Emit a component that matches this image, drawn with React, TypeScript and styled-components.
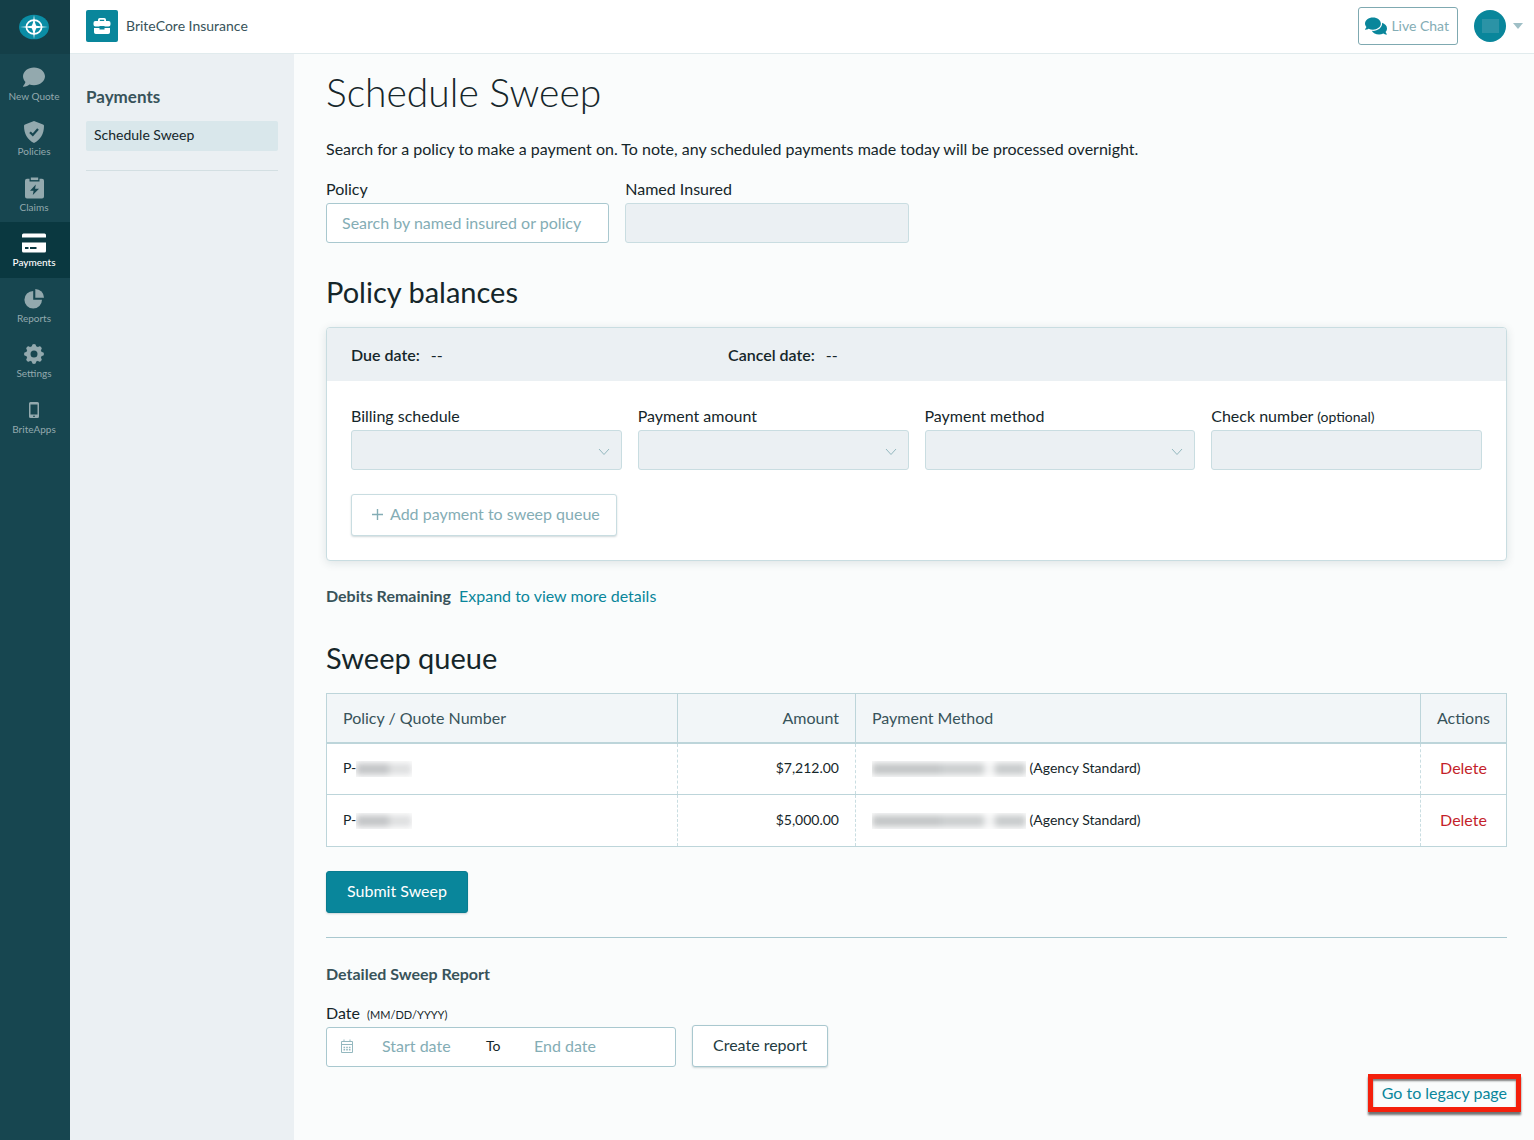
import React from "react";
import styled, { createGlobalStyle, css } from "styled-components";
import { FaComment, FaComments } from "react-icons/fa";

const color = {
  ink: "#15262a",
  slate: "#38535a",
  teal: "#09869b",
  line: "#a9c8cf",
  softLine: "#c9dde1",
  placeholder: "#84adb5",
  panel: "#ebf0f3",
  page: "#fafcfc",
  rail: "#174650",
  danger: "#c41f2b",
};

const GlobalStyle = createGlobalStyle`
  *, *::before, *::after { box-sizing: border-box; }
  body {
    margin: 0;
    background: ${color.page};
    color: ${color.ink};
    font-family: Lato, "Noto Sans", sans-serif;
    font-size: 16px;
    line-height: 24px;
  }
  h1, h2, h3, p { margin: 0; }
  button, input, select { font: inherit; }
  a { color: ${color.teal}; text-decoration: none; }
`;

const Shell = styled.div`
  display: grid;
  grid-template-columns: 70px 1fr;
  min-height: 100vh;
`;

const Rail = styled.div`
  background: ${color.rail};
`;

const Brand = styled.a`
  display: flex;
  height: 54px;
  align-items: center;
  justify-content: center;
  padding-right: 2px;
  background: #143f48;
`;

const RailNav = styled.nav`
  display: flex;
  flex-direction: column;
  padding-top: 2px;
`;

const RailItem = styled.a<{ $active?: boolean }>`
  display: flex;
  flex-direction: column;
  align-items: center;
  height: 55px;
  padding: 9px 2px 0 0;
  font-size: 10px;
  line-height: 14px;
  color: #93a9ae;
  &:nth-child(even) { height: 56px; }
  svg { height: 24px; }
  ${(p) => p.$active && css`
    background: #0a3840;
    color: #fff;
    font-weight: 500;
  `}
`;

const Body = styled.div`
  display: flex;
  flex-direction: column;
  min-width: 0;
`;

const TopBar = styled.header`
  display: flex;
  align-items: center;
  height: 54px;
  padding: 0 11px 1px 16px;
  background: #fff;
  border-bottom: 1px solid #e1ebed;
`;

const OrgIcon = styled.span`
  display: grid;
  place-items: center;
  width: 32px;
  height: 32px;
  margin-right: 8px;
  border-radius: 2px;
  background: ${color.teal};
`;

const OrgName = styled.span`
  flex: 1;
  font-size: 14px;
  color: ${color.slate};
`;

const ChatButton = styled.button`
  display: flex;
  align-items: center;
  gap: 4px;
  height: 38px;
  padding: 0 8px 0 6px;
  margin-right: 16px;
  border: 1px solid #7fa9b1;
  border-radius: 3px;
  background: #fff;
  color: ${color.placeholder};
  font-size: 14px;
  svg { color: ${color.teal}; }
`;

const UserMenu = styled.button`
  display: flex;
  align-items: center;
  gap: 7px;
  padding: 0;
  border: 0;
  background: none;
`;

const Avatar = styled.span`
  display: grid;
  place-items: center;
  width: 32px;
  height: 32px;
  border-radius: 50%;
  background: ${color.teal};
  &::before {
    content: "";
    width: 17px;
    height: 14px;
    background: #2b93a6;
  }
`;

const Columns = styled.div`
  display: grid;
  grid-template-columns: 224px 1fr;
  flex: 1;
`;

const SidePanel = styled.aside`
  padding: 31px 16px;
  background: ${color.panel};
`;

const SideTitle = styled.h2`
  margin-bottom: 12px;
  font-size: 17px;
  line-height: 24px;
  font-weight: 700;
  color: ${color.slate};
`;

const SideLink = styled.a`
  display: block;
  padding: 0 8px 2px;
  border-radius: 2px;
  background: #d9e7eb;
  color: ${color.ink};
  font-size: 14px;
  line-height: 28px;
`;

const SideRule = styled.hr`
  height: 1px;
  margin: 19px 0 0;
  border: 0;
  background: #d3dfe2;
`;

const Main = styled.main`
  min-width: 0;
  padding: 14px 13px 0 32px;
`;

const Content = styled.div`
  margin-right: 14px;
`;

const PageTitle = styled.h1`
  margin-bottom: 21px;
  font-size: 39px;
  line-height: 48px;
  font-weight: 300;
`;

const Intro = styled.p`
  margin-bottom: 17px;
`;

const SectionTitle = styled.h2`
  margin: 32px 0 18px;
  font-size: 29px;
  line-height: 34px;
  font-weight: 400;
`;

const FieldGrid = styled.div`
  display: grid;
  grid-template-columns: repeat(4, 1fr);
  gap: 16px;
`;

const FieldBox = styled.div`
  display: flex;
  flex-direction: column;
  gap: 3px;
  min-width: 0;
`;

const Label = styled.label`
  line-height: 22px;
  small { font-size: 14px; line-height: 14px; }
`;

const controlLook = css`
  width: 100%;
  height: 40px;
  padding: 0 15px 2px;
  border: 1px solid ${color.line};
  border-radius: 3px;
  background: #fff;
  color: ${color.ink};
  &::placeholder { color: ${color.placeholder}; opacity: 1; }
  &:disabled { background: ${color.panel}; border-color: ${color.softLine}; opacity: 1; }
`;

const TextInput = styled.input`
  ${controlLook}
`;

const Select = styled.select`
  ${controlLook}
  appearance: none;
  grid-area: 1 / 1;
`;

const SelectWrap = styled.div`
  display: grid;
  align-items: center;
  svg {
    grid-area: 1 / 1;
    justify-self: end;
    margin: 4px 12px 0 0;
    pointer-events: none;
    color: #94b8bf;
  }
`;

const Card = styled.section`
  border: 1px solid ${color.softLine};
  border-radius: 4px;
  background: #fff;
  box-shadow: 0 2px 10px rgba(20, 50, 60, 0.12);
`;

const CardHead = styled.dl`
  display: grid;
  grid-template-columns: repeat(3, 1fr);
  margin: 0;
  padding: 16px 24px;
  border-radius: 3px 3px 0 0;
  background: ${color.panel};
  line-height: 21px;
  div { display: flex; gap: 11px; }
  dt { font-weight: 600; }
  dd { margin: 0; }
`;

const CardBody = styled.div`
  padding: 24px;
`;

const Button = styled.button<{ $tone?: "primary" | "muted" }>`
  display: inline-flex;
  align-items: center;
  justify-content: center;
  gap: 6px;
  height: 42px;
  padding: 0 20px 2px;
  border: 1px solid ${color.line};
  border-radius: 3px;
  background: #fff;
  color: #233b41;
  box-shadow: 0 1px 2px rgba(20, 60, 70, 0.2);
  white-space: nowrap;
  ${(p) => p.$tone === "primary" && css`
    background: ${color.teal};
    border-color: #087c90;
    color: #fff;
  `}
  ${(p) => p.$tone === "muted" && css`
    margin-top: 24px;
    padding: 0 16px 2px 19px;
    border-color: ${color.softLine};
    color: ${color.placeholder};
  `}
`;

const Debits = styled.p`
  display: flex;
  gap: 8px;
  margin: 23px 0 33px;
  strong { color: ${color.slate}; font-weight: 700; }
`;

const Table = styled.table`
  width: 100%;
  table-layout: fixed;
  border-collapse: collapse;
  border: 1px solid #bdd5da;
  background: #fff;
  font-size: 14px;
`;

const Col = styled.col<{ $w?: number }>`
  ${(p) => p.$w && css`width: ${p.$w}px;`}
`;

type CellProps = { $align?: "left" | "right" | "center" };

const Th = styled.th<CellProps>`
  height: 49px;
  padding: 0 16px;
  border-right: 1px solid #bdd5da;
  border-bottom: 2px solid #bdd5da;
  background: #f2f6f8;
  color: ${color.slate};
  font-size: 16px;
  font-weight: 400;
  text-align: ${(p) => p.$align ?? "left"};
`;

const Td = styled.td<CellProps>`
  height: 52px;
  padding: 0 16px 1px;
  border-bottom: 1px solid #bdd5da;
  text-align: ${(p) => p.$align ?? "left"};
  & + & { border-left: 1px dashed #c9dde1; }
`;

const Redacted = styled.span<{ $wide?: boolean }>`
  display: inline-block;
  width: ${(p) => (p.$wide ? 154 : 56)}px;
  height: 16px;
  padding: 2px 0;
  vertical-align: -4px;
  overflow: hidden;
  &::before {
    content: "";
    display: block;
    height: 12px;
    filter: blur(3px);
    background: ${(p) =>
      p.$wide
        ? "linear-gradient(90deg, #c3c6c7 0 45%, #cbcecf 45% 73%, #f4f5f5 73% 80%, #c8cbcc 80%)"
        : "linear-gradient(90deg, #c3c5c7 0 58%, #dfe0e1 60% 100%)"};
  }
`;

const DeleteButton = styled.button`
  padding: 0;
  border: 0;
  background: none;
  color: ${color.danger};
  font-size: 16px;
`;

const Actions = styled.div`
  display: flex;
  margin-top: 24px;
`;

const Rule = styled.hr`
  height: 1px;
  margin: 24px 0;
  border: 0;
  background: ${color.line};
`;

const ReportTitle = styled.h3`
  margin-bottom: 16px;
  font-size: 16px;
  line-height: 24px;
  font-weight: 700;
  color: ${color.slate};
`;

const ReportRow = styled.div`
  display: flex;
  align-items: flex-end;
  gap: 16px;
`;

const DateLabel = styled(Label)`
  small { margin-left: 3px; font-size: 11px; }
`;

const DateRange = styled.div`
  display: flex;
  align-items: center;
  width: 350px;
  height: 40px;
  padding: 0 0 2px 13px;
  border: 1px solid ${color.line};
  border-radius: 3px;
  background: #fff;
  svg { margin-right: 28px; color: #94b8bf; flex: none; }
  span { width: 48px; font-size: 14px; }
`;

const DateInput = styled.input`
  width: 104px;
  padding: 0;
  border: 0;
  background: none;
  &::placeholder { color: ${color.placeholder}; opacity: 1; }
`;

const Footer = styled.footer`
  display: flex;
  justify-content: flex-end;
  padding-top: 7px;
`;

const LegacyLink = styled.a`
  padding: 2px 9px;
  border: 5px solid #f4200c;
  box-shadow: 0 3px 2px rgba(0, 0, 0, 0.55), inset 0 2px 2px rgba(0, 0, 0, 0.5);
`;

const LogoMark = () => (
  <svg width="30" height="26" viewBox="0 0 30 26" aria-hidden="true">
    <ellipse cx="15" cy="13" rx="15" ry="12.3" fill="#0a8da5" />
    <ellipse cx="15" cy="13" rx="7.6" ry="6.8" fill="none" stroke="#fff" strokeWidth="1.7" />
    <path d="M15 1l1 7.500 1.200 3.300L21 12.300l8 .7-8 .7-3.800.5L16 17.500 15 25l-1-7.500-1.200-3.300L9 13.700 1 13l8-.7 3.800-.5L14 8.500z" fill="#fff" />
  </svg>
);

const BriefcaseIcon = () => (
  <svg width="18" height="18" viewBox="0 0 18 18" fill="#fff" aria-hidden="true">
    <path d="M5 4V2.800A1.800 1.800 0 0 1 6.800 1h4.400A1.800 1.800 0 0 1 13 2.800V4h2.600A1.900 1.900 0 0 1 17.500 6v1.600A1.900 1.900 0 0 1 15.600 9.500h-4.100V9h-5v.5H2.400A1.900 1.900 0 0 1 .5 7.600V6a1.900 1.900 0 0 1 1.900-2zm1.800 0h4.400V2.800H6.800z" />
    <path d="M1 11h5.500v1.600h5V11H17v4.200a1.800 1.800 0 0 1-1.800 1.800H2.800A1.800 1.800 0 0 1 1 15.200z" />
  </svg>
);

const ShieldIcon = () => (
  <svg width="20" viewBox="0 0 20 22" aria-hidden="true">
    <path d="M10 0l9 3.400c.6.200 1 .7 1 1.400C20 13 16.500 18.800 10 22 3.500 18.800 0 13 0 4.800c0-.7.400-1.200 1-1.400z" fill="currentColor" />
    <path d="M6 11.200l2.800 2.800 5.200-6" fill="none" stroke={color.rail} strokeWidth="2.200" />
  </svg>
);

const ClipboardIcon = () => (
  <svg width="19" viewBox="0 0 19 21" aria-hidden="true">
    <path d="M2 1.200h2.500V4h10V1.200H17a2 2 0 0 1 2 2V19a2 2 0 0 1-2 2H2a2 2 0 0 1-2-2V3.200a2 2 0 0 1 2-2z" fill="currentColor" />
    <path d="M5.800 0h7.400v2.600H5.800z" fill="currentColor" />
    <path d="M10.800 7L5 13.200h3.600L7.800 17.600 14 11.300h-3.900z" fill={color.rail} />
  </svg>
);

const CardIcon = () => (
  <svg width="24" viewBox="0 0 24 19" aria-hidden="true">
    <path d="M1.500 0h21A1.500 1.500 0 0 1 24 1.500V4H0V1.500A1.500 1.500 0 0 1 1.500 0zM0 9h24v8.500a1.500 1.500 0 0 1-1.500 1.500h-21A1.500 1.500 0 0 1 0 17.500zm3 4.500v2h3.500v-2zm5 0v2h6.500v-2z" fill="currentColor" fillRule="evenodd" />
  </svg>
);

const PieIcon = () => (
  <svg width="20" viewBox="0 0 20 20" fill="currentColor" aria-hidden="true">
    <path d="M9.200 2v8.800H18A8.800 8.800 0 1 1 9.200 2z" />
    <path d="M11.300 0A8.700 8.700 0 0 1 20 8.700h-8.700z" />
  </svg>
);

const GearIcon = () => (
  <svg width="20" viewBox="0 0 20 20" fill="none" stroke="currentColor" aria-hidden="true">
    <circle cx="10" cy="10" r="5.700" strokeWidth="4.400" />
    <g strokeWidth="4.200" strokeLinecap="round">
      {[0, 45, 90, 135, 180, 225, 270, 315].map((deg) => (
        <path key={deg} d="M10 2.100v1.400" transform={`rotate(${deg} 10 10)`} />
      ))}
    </g>
  </svg>
);

const PhoneIcon = () => (
  <svg width="10" viewBox="0 0 10 16" aria-hidden="true">
    <path d="M1.500 0h7A1.500 1.500 0 0 1 10 1.500v13A1.500 1.500 0 0 1 8.500 16h-7A1.500 1.500 0 0 1 0 14.500v-13A1.500 1.500 0 0 1 1.500 0zM1.500 2.500v10h7v-10zM4 13.700v1h2v-1z" fill="currentColor" fillRule="evenodd" />
  </svg>
);

const ChevronIcon = () => (
  <svg width="12" height="8" viewBox="0 0 12 8" fill="none" stroke="currentColor" aria-hidden="true">
    <path d="M1 1l5 5.500L11 1" />
  </svg>
);

const PlusIcon = () => (
  <svg width="13" height="13" viewBox="0 0 13 13" stroke="currentColor" strokeWidth="1.400" aria-hidden="true">
    <path d="M6.500 1v11M1 6.500h11" />
  </svg>
);

const CalendarIcon = () => (
  <svg width="14" height="14" viewBox="0 0 14 14" fill="none" stroke="currentColor" aria-hidden="true">
    <path d="M1.500 2.500h11v11h-11zM1.500 5.500h11M4 .5v2M10 .5v2" />
    <path d="M3.500 8.500h7M3.500 10.800h7" strokeWidth="1.400" strokeDasharray="1.600 1.100" />
  </svg>
);

const CaretIcon = () => (
  <svg width="10" height="6" viewBox="0 0 10 6" fill="#9fbfc6" aria-hidden="true">
    <path d="M0 0h10L5 6z" />
  </svg>
);

const navItems = [
  { label: "New Quote", icon: <FaComment size={22} /> },
  { label: "Policies", icon: <ShieldIcon /> },
  { label: "Claims", icon: <ClipboardIcon /> },
  { label: "Payments", icon: <CardIcon />, active: true },
  { label: "Reports", icon: <PieIcon /> },
  { label: "Settings", icon: <GearIcon /> },
  { label: "BriteApps", icon: <PhoneIcon /> },
];

const selects = [
  { id: "billing-schedule", label: "Billing schedule" },
  { id: "payment-amount", label: "Payment amount" },
  { id: "payment-method", label: "Payment method" },
];

const queue = [
  { id: 1, amount: "$7,212.00" },
  { id: 2, amount: "$5,000.00" },
];

export default function App() {
  return (
    <>
      <GlobalStyle />
      <Shell>
        <Rail>
          <Brand href="#"><LogoMark /></Brand>
          <RailNav>
            {navItems.map((item) => (
              <RailItem key={item.label} href="#" $active={item.active}>
                {item.icon}
                {item.label}
              </RailItem>
            ))}
          </RailNav>
        </Rail>
        <Body>
          <TopBar>
            <OrgIcon><BriefcaseIcon /></OrgIcon>
            <OrgName>BriteCore Insurance</OrgName>
            <ChatButton type="button"><FaComments size={22} />Live Chat</ChatButton>
            <UserMenu type="button"><Avatar /><CaretIcon /></UserMenu>
          </TopBar>
          <Columns>
            <SidePanel>
              <SideTitle>Payments</SideTitle>
              <SideLink href="#">Schedule Sweep</SideLink>
              <SideRule />
            </SidePanel>
            <Main>
              <Content>
                <PageTitle>Schedule Sweep</PageTitle>
                <Intro>
                  Search for a policy to make a payment on. To note, any scheduled payments made today will be processed overnight.
                </Intro>
                <FieldGrid>
                  <FieldBox>
                    <Label htmlFor="policy">Policy</Label>
                    <TextInput id="policy" type="text" placeholder="Search by named insured or policy" />
                  </FieldBox>
                  <FieldBox>
                    <Label htmlFor="named-insured">Named Insured</Label>
                    <TextInput id="named-insured" type="text" disabled />
                  </FieldBox>
                </FieldGrid>

                <SectionTitle>Policy balances</SectionTitle>
                <Card>
                  <CardHead>
                    <div><dt>Due date:</dt><dd>--</dd></div>
                    <div><dt>Cancel date:</dt><dd>--</dd></div>
                  </CardHead>
                  <CardBody>
                    <FieldGrid>
                      {selects.map((s) => (
                        <FieldBox key={s.id}>
                          <Label htmlFor={s.id}>{s.label}</Label>
                          <SelectWrap>
                            <Select id={s.id} disabled />
                            <ChevronIcon />
                          </SelectWrap>
                        </FieldBox>
                      ))}
                      <FieldBox>
                        <Label htmlFor="check-number">Check number <small>(optional)</small></Label>
                        <TextInput id="check-number" type="text" disabled />
                      </FieldBox>
                    </FieldGrid>
                    <Button type="button" $tone="muted"><PlusIcon />Add payment to sweep queue</Button>
                  </CardBody>
                </Card>
                <Debits>
                  <strong>Debits Remaining</strong>
                  <a href="#">Expand to view more details</a>
                </Debits>

                <SectionTitle>Sweep queue</SectionTitle>
                <Table>
                  <colgroup>
                    <Col $w={351} />
                    <Col $w={178} />
                    <Col />
                    <Col $w={86} />
                  </colgroup>
                  <thead>
                    <tr>
                      <Th>Policy / Quote Number</Th>
                      <Th $align="right">Amount</Th>
                      <Th>Payment Method</Th>
                      <Th $align="center">Actions</Th>
                    </tr>
                  </thead>
                  <tbody>
                    {queue.map((row) => (
                      <tr key={row.id}>
                        <Td>P-<Redacted /></Td>
                        <Td $align="right">{row.amount}</Td>
                        <Td><Redacted $wide /> (Agency Standard)</Td>
                        <Td $align="center"><DeleteButton type="button">Delete</DeleteButton></Td>
                      </tr>
                    ))}
                  </tbody>
                </Table>
                <Actions>
                  <Button type="button" $tone="primary">Submit Sweep</Button>
                </Actions>
                <Rule />
                <ReportTitle>Detailed Sweep Report</ReportTitle>
                <ReportRow>
                  <FieldBox>
                    <DateLabel htmlFor="start-date">Date <small>(MM/DD/YYYY)</small></DateLabel>
                    <DateRange>
                      <CalendarIcon />
                      <DateInput id="start-date" type="text" placeholder="Start date" />
                      <span>To</span>
                      <DateInput type="text" placeholder="End date" aria-label="End date" />
                    </DateRange>
                  </FieldBox>
                  <Button type="button">Create report</Button>
                </ReportRow>
              </Content>
              <Footer>
                <LegacyLink href="#">Go to legacy page</LegacyLink>
              </Footer>
            </Main>
          </Columns>
        </Body>
      </Shell>
    </>
  );
}
